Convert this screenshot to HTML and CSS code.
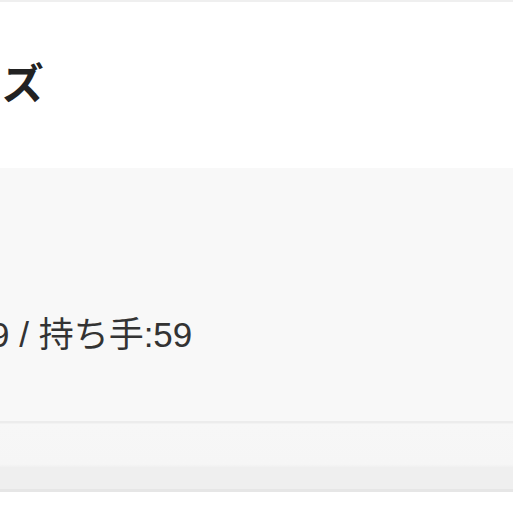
FILE: index.html
```html
<!doctype html>
<html>
<head>
<meta charset="UTF-8">
<meta name="viewport" content="width=device-width, initial-scale=1">
<link rel="stylesheet" href="styles.css">
</head>
<body>
<div class="topbar"></div>
<div class="title-wrap">
  <h2 class="title">サイズ</h2>
</div>
<div class="detail">
  <p class="spec">9 / 持ち手:59</p>
</div>
<div class="footer-bar"></div>
</body>
</html>
```
FILE: styles.css
```css
body{
  margin: 0;
  padding: 0;
  background: #fff;
  font-family: "Liberation Sans", "Noto Sans CJK JP", sans-serif;
  overflow: hidden;
}

.topbar{
  height: 2px;
  background: #efefef;
}

.title-wrap{
  height: 104px;
  padding-top: 62px;
}

.title{
  margin: 0 0 0 -81px;
  font-size: 42px;
  line-height: 42px;
  font-weight: bold;
  color: #222;
  white-space: nowrap;
}

.detail{
  height: 108px;
  padding-top: 145px;
  background: #f8f8f8;
  border-bottom: 2px solid #ececec;
}

.spec{
  margin: 0 0 0 -10px;
  font-size: 35px;
  line-height: 44px;
  color: #333;
  white-space: nowrap;
}

.footer-bar{
  height: 65px;
  background: linear-gradient(#f7f7f7 0%, #f6f6f6 62%, #efefef 67%, #efefef 100%);
  border-top: 1px solid #f2f2f2;
  border-bottom: 3px solid #e6e6e6;
}
```
